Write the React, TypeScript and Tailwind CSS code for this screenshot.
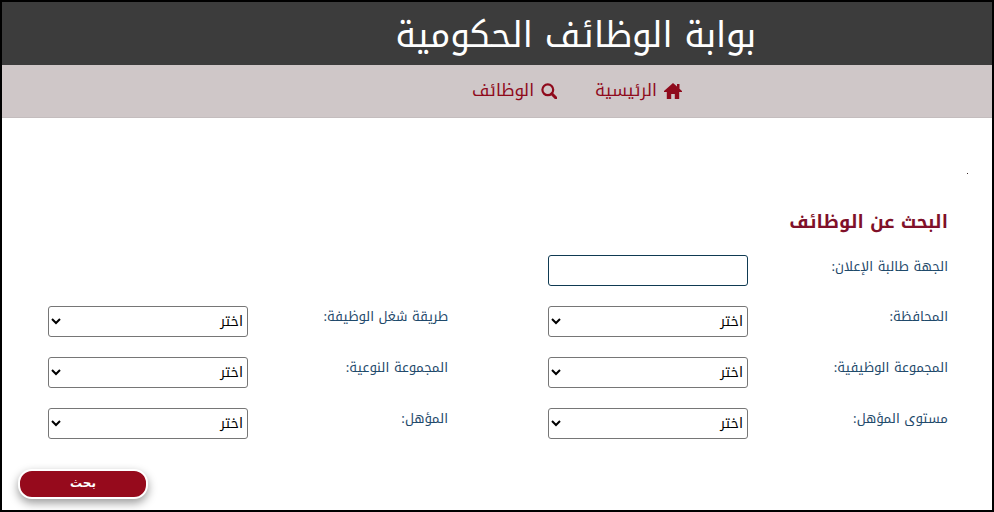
const font = { fontFamily: '"Noto Kufi Arabic", "DejaVu Sans", sans-serif' };

function Field({ label, input }: { label: string; input?: boolean }) {
  return (
    <div className="flex items-start h-[31px]">
      <label className={input ? "w-[200px] shrink-0 text-[13.33px] leading-[20px] pt-[2px] text-[#1f4a6b]" : "w-[200px] shrink-0 text-[13.33px] leading-[20px] pt-[1px] text-[#1f4a6b]"}>{label}</label>
      {input ? (
        <input className="w-[200px] h-[31px] bg-white border border-[#0f3a52] rounded-[3px]" />
      ) : (
        <select className="w-[200px] h-[31px] bg-white border border-[#767676] rounded-[3px] text-[14px] text-black appearance-auto">
          <option>اختر</option>
        </select>
      )}
    </div>
  );
}

export default function App() {
  return (
    <div dir="rtl" style={font} className="w-[994px] h-[512px] border-2 border-black bg-white overflow-hidden flex flex-col">
      <header className="h-[63px] shrink-0 bg-[#3c3c3c] flex items-center pr-[236px] pt-[3px]">
        <h1 className="text-[35px] leading-none text-white font-normal">بوابة الوظائف الحكومية</h1>
      </header>
      <nav className="h-[53px] shrink-0 bg-[#cfc7c8] border-b border-[#c4bdbe] flex items-center gap-[38px] pr-[310px] text-[#8f0a1c] text-[17px]">
        <a className="flex items-center gap-[7px]">
          <svg width="18" height="16" viewBox="0 0 18 16" fill="currentColor">
            <path d="M9 0 L13 3.6 V1 H15.5 V5.8 L18 8 V9 H15.2 V16 H10.8 V11 H7.2 V16 H2.8 V9 H0 V8 Z" />
          </svg>
          الرئيسية
        </a>
        <a className="flex items-center gap-[7px]">
          <svg width="16" height="16" viewBox="0 0 16 16" fill="none" stroke="currentColor">
            <circle cx="6.8" cy="6.8" r="5.4" strokeWidth="2.2" />
            <path d="M10.8 10.8 L15 15" strokeWidth="3" strokeLinecap="round" />
          </svg>
          الوظائف
        </a>
      </nav>
      <main className="flex-1 flex flex-col pr-[44px] relative">
        <span className="absolute top-[55px] right-[24px] w-px h-px bg-[#3a2a2a]" />
        <h2 className="mt-[92px] text-[18px] leading-[24px] font-bold text-[#801029]">البحث عن الوظائف</h2>
        <div className="mt-[21px] grid grid-cols-[500px_400px] gap-y-[20px]">
          <Field label="الجهة طالبة الإعلان:" input />
          <div />
          <Field label="المحافظة:" />
          <Field label="طريقة شغل الوظيفة:" />
          <Field label="المجموعة الوظيفية:" />
          <Field label="المجموعة النوعية:" />
          <Field label="مستوى المؤهل:" />
          <Field label="المؤهل:" />
        </div>
        <div className="flex justify-end mt-[30px] pl-[16px]">
          <button style={{ fontFamily: '"DejaVu Sans", sans-serif' }} className="w-[130px] h-[30px] rounded-[14px] bg-[#960a1c] border-2 border-white text-white text-[12px] leading-[22px] font-bold pb-[2px] shadow-[0_4px_10px_rgba(0,0,0,0.4)]">بحث</button>
        </div>
      </main>
    </div>
  );
}
